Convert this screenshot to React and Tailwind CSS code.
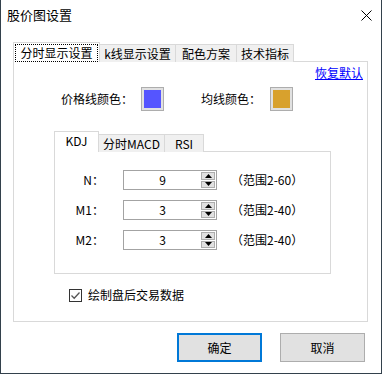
import React from "react";

const F = "[font-family:'Noto_Sans_CJK_SC','Noto_Sans',sans-serif]";

function ColorBox({ color }) {
  return (
    <div className="w-[23px] h-[24px] border border-[#adadad] bg-[#e1e1e1] p-[2px]">
      <div className={`w-full h-full ${color}`} />
    </div>
  );
}

function Spin({ value, range, label }) {
  return (
    <div className="flex items-center h-[20px]">
      <div className="w-[50px] text-right text-[12px] leading-[20px] pr-[1px]">{label}</div>
      <div className="ml-[18px] w-[94px] h-[20px] border border-[#a3a3a3] bg-white flex items-stretch">
        <div className="flex-1 text-center text-[12px] leading-[17px]">{value}</div>
        <div className="w-[14px] flex flex-col gap-[1px] py-[1px] mr-[1px]">
          <div className="flex-1 border border-[#adadad] bg-[#e1e1e1] flex items-center justify-center">
            <svg width="7" height="4" viewBox="0 0 7 4"><polygon points="3.5,0 7,4 0,4" fill="#000" /></svg>
          </div>
          <div className="flex-1 border border-[#adadad] bg-[#e1e1e1] flex items-center justify-center">
            <svg width="7" height="4" viewBox="0 0 7 4"><polygon points="0,0 7,0 3.5,4" fill="#000" /></svg>
          </div>
        </div>
      </div>
      <div className="ml-[14px] text-[12px] leading-[20px]">{range}</div>
    </div>
  );
}

export default function App() {
  return (
    <div className={`w-[382px] h-[374px] bg-white border-x border-b border-[#33414c] flex flex-col text-black ${F}`}>
      <div className="h-[30px] flex items-center justify-between pl-[6px] pr-[9px]">
        <span className="text-[13px] leading-[16px]">股价图设置</span>
        <svg width="11" height="11" viewBox="0 0 11 11">
          <path d="M0.5 0.5 L10.5 10.5 M10.5 0.5 L0.5 10.5" stroke="#000" strokeWidth="1" />
        </svg>
      </div>
      <div className="pl-[12px] mt-[12px] flex flex-col">
        <div className="flex items-end h-[20px] relative z-10 -mb-px">
          <div className="w-[87px] h-[20px] border border-b-0 border-[#d9d9d9] bg-white p-[1px] pb-0">
            <div className="h-full border border-dotted border-black flex items-center justify-center text-[12px] leading-[16px]">分时显示设置</div>
          </div>
          <div className="w-[76px] h-[18px] border-t border-r border-[#d9d9d9] bg-[#f0f0f0] flex items-center justify-center text-[12px] leading-[16px]">k线显示设置</div>
          <div className="w-[61px] h-[18px] border-t border-r border-[#d9d9d9] bg-[#f0f0f0] flex items-center justify-center text-[12px] leading-[16px]">配色方案</div>
          <div className="w-[57px] h-[18px] border-t border-r border-[#d9d9d9] bg-[#f0f0f0] flex items-center justify-center text-[12px] leading-[16px]">技术指标</div>
        </div>
        <div className="w-[355px] h-[261px] border border-[#d9d9d9] bg-white flex flex-col">
          <div className="flex justify-end pr-[4px] pt-[4px]">
            <span className="text-[12px] leading-[14px] text-[#0000ff] underline">恢复默认</span>
          </div>
          <div className="flex items-center mt-[7px] pl-[47px] h-[24px]">
            <span className="text-[12px] w-[80px]">价格线颜色：</span>
            <ColorBox color="bg-[#5555ff]" />
            <span className="text-[12px] ml-[37px] w-[69px]">均线颜色：</span>
            <ColorBox color="bg-[#d8a12d]" />
          </div>
          <div className="ml-[40px] mt-[20px] flex flex-col">
            <div className="flex items-end h-[21px] relative z-10 -mb-px">
              <div className="w-[45px] h-[21px] border border-b-0 border-[#d9d9d9] bg-white flex items-center justify-center text-[12px] leading-[16px] pb-[2px]">KDJ</div>
              <div className="w-[66px] h-[18px] border-t border-r border-[#d9d9d9] bg-[#f0f0f0] flex items-center justify-center text-[12px] leading-[16px]">分时MACD</div>
              <div className="w-[39px] h-[18px] border-t border-r border-[#d9d9d9] bg-[#f0f0f0] flex items-center justify-center text-[12px] leading-[16px]">RSI</div>
            </div>
            <div className="w-[277px] h-[123px] border border-[#d9d9d9] bg-white flex flex-col gap-[10px] pt-[18px]">
              <Spin label="N：" value="9" range="（范围2-60）" />
              <Spin label="M1：" value="3" range="（范围2-40）" />
              <Spin label="M2：" value="3" range="（范围2-40）" />
            </div>
          </div>
          <div className="flex items-center mt-[13px] ml-[55px]">
            <div className="w-[13px] h-[13px] border border-[#333] bg-white flex items-center justify-center">
              <svg width="11" height="11" viewBox="0 0 11 11">
                <polyline points="1.5,5.5 4.2,8.2 9.5,2.5" fill="none" stroke="#555" strokeWidth="1.3" />
              </svg>
            </div>
            <span className="ml-[6px] text-[12px] leading-[16px]">绘制盘后交易数据</span>
          </div>
        </div>
        <div className="w-[355px] flex justify-end gap-[18px] pr-[3px] mt-[11px]">
          <div className="w-[85px] h-[29px] border-2 border-[#0078d7] bg-[#e1e1e1] flex items-center justify-center text-[12px]">确定</div>
          <div className="w-[85px] h-[29px] border border-[#adadad] bg-[#e1e1e1] flex items-center justify-center text-[12px]">取消</div>
        </div>
      </div>
    </div>
  );
}
